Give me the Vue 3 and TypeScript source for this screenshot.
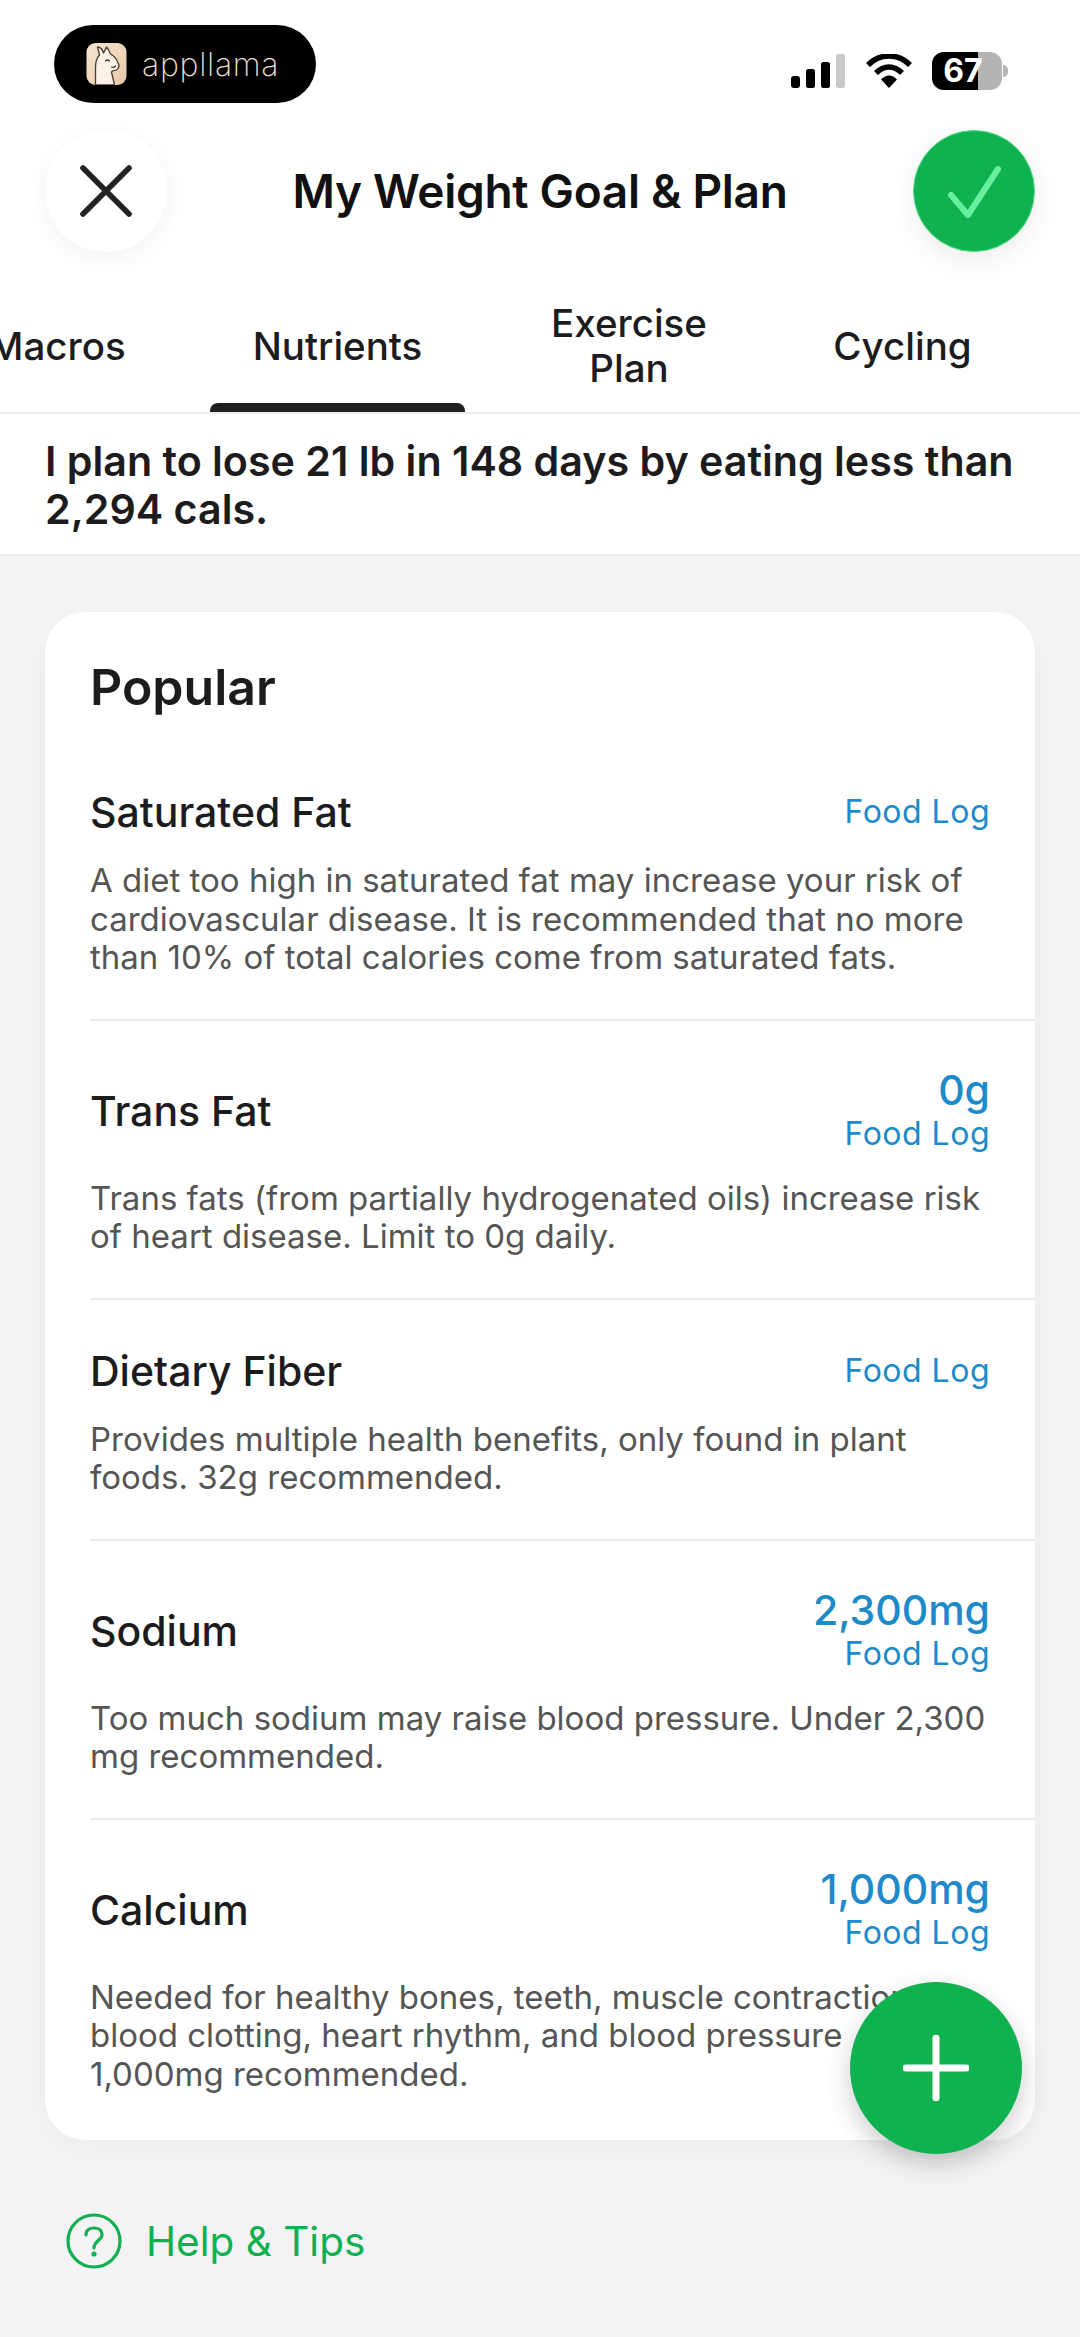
<script setup lang="ts">
interface Nutrient {
  name: string;
  value?: string;
  desc: string;
}
const tabs = [
  { label: "Macros", active: false },
  { label: "Nutrients", active: true },
  { label: "Exercise Plan", active: false },
  { label: "Cycling", active: false },
];
const nutrients: Nutrient[] = [
  { name: "Saturated Fat", desc: "A diet too high in saturated fat may increase your risk of cardiovascular disease. It is recommended that no more than 10% of total calories come from saturated fats." },
  { name: "Trans Fat", value: "0g", desc: "Trans fats (from partially hydrogenated oils) increase risk of heart disease. Limit to 0g daily." },
  { name: "Dietary Fiber", desc: "Provides multiple health benefits, only found in plant foods. 32g recommended." },
  { name: "Sodium", value: "2,300mg", desc: "Too much sodium may raise blood pressure. Under 2,300 mg recommended." },
  { name: "Calcium", value: "1,000mg", desc: "Needed for healthy bones, teeth, muscle contraction, blood clotting, heart rhythm, and blood pressure\u2009 control. 1,000mg recommended." },
];
</script>

<template>
  <div class="page">
    <header class="top">
      <div class="status">
        <div class="pill">
          <svg class="llama" viewBox="0 0 40 42">
            <defs>
              <linearGradient id="lg" x1="0" y1="0" x2="1" y2="1">
                <stop offset="0" stop-color="#f6e6d2" />
                <stop offset="1" stop-color="#e6c9a6" />
              </linearGradient>
            </defs>
            <rect width="40" height="42" rx="9" fill="url(#lg)" />
            <path d="M9 42V25C9 20 10 15 13 12L11 4C14 4 16 7 17 10L20 4C22 6 23 9 24 11C28 13 30 16 31 19C33 22 33 25 30 27C27 28 25 28 25 29L28 42Z" fill="#fbf3e8" stroke="#4a3b2c" stroke-width="1.3" stroke-linejoin="round" />
            <path d="M19 18Q21 16 23 18M29 23Q27 25 25 24" fill="none" stroke="#4a3b2c" stroke-width="1.2" stroke-linecap="round" />
          </svg>
          <span class="brand">appllama</span>
        </div>
        <div class="indicators">
          <svg class="signal" viewBox="0 0 54 34">
            <rect x="0" y="22" width="9" height="12" rx="3" fill="#000" />
            <rect x="15" y="15" width="9" height="19" rx="2.5" fill="#000" />
            <rect x="30" y="8" width="9" height="26" rx="2.5" fill="#000" />
            <rect x="45" y="0" width="9" height="34" rx="2.5" fill="#c9c9c9" />
          </svg>
          <svg class="wifi" viewBox="0 0 46 34">
            <path d="M2 11C14 -1 32 -1 44 11" fill="none" stroke="#000" stroke-width="5.6" />
            <path d="M10 19C18 11 28 11 36 19" fill="none" stroke="#000" stroke-width="5.6" />
            <path d="M15 25.5C20 20 26 20 31 25.5L23 34Z" fill="#000" />
          </svg>
          <div class="battery">
            <div class="cell"><span class="level"></span><span class="pct">67</span></div>
            <span class="nub"></span>
          </div>
        </div>
      </div>

      <div class="titlebar">
        <button class="round close" aria-label="Close">
          <svg viewBox="0 0 52 52" width="52" height="52">
            <path d="M3 3L49 49M49 3L3 49" stroke="#232323" stroke-width="5.6" stroke-linecap="round" />
          </svg>
        </button>
        <h1>My Weight Goal &amp; Plan</h1>
        <button class="round ok" aria-label="Save">
          <svg viewBox="0 0 54 54" width="54" height="54">
            <path d="M4 31L21 51L51 5" fill="none" stroke="#67ef9f" stroke-width="6" stroke-linecap="round" stroke-linejoin="round" />
          </svg>
        </button>
      </div>

      <nav class="tabs">
        <div v-for="t in tabs" :key="t.label" class="tab" :class="{ active: t.active }">
          <span>{{ t.label }}</span>
        </div>
      </nav>

      <p class="summary">I plan to lose 21 lb in 148 days by eating less than 2,294 cals.</p>
    </header>

    <main class="content">
      <section class="card">
        <h2>Popular</h2>
        <article v-for="n in nutrients" :key="n.name" class="row">
          <div class="row-head">
            <h3>{{ n.name }}</h3>
            <div class="side">
              <span v-if="n.value" class="value">{{ n.value }}</span>
              <span class="log">Food Log</span>
            </div>
          </div>
          <p class="desc">{{ n.desc }}</p>
        </article>
      </section>

      <div class="help">
        <svg viewBox="0 0 56 56" width="56" height="56">
          <circle cx="28" cy="28" r="26" fill="none" stroke="#10b050" stroke-width="3.2" />
          <path d="M20 22C20 17 24 15 28 15C32 15 36 17 36 22C36 27 28 28 28 35" fill="none" stroke="#10b050" stroke-width="3.2" stroke-linecap="round" />
          <circle cx="28" cy="41" r="2.6" fill="#10b050" />
        </svg>
        <span>Help &amp; Tips</span>
      </div>
    </main>

    <button class="fab" aria-label="Add">
      <svg viewBox="0 0 66 66" width="66" height="66">
        <path d="M33 3V63M3 33H63" stroke="#fff" stroke-width="7" stroke-linecap="round" />
      </svg>
    </button>
  </div>
</template>

<style>
html, body { margin: 0; background: #f3f2f5; }
</style>

<style scoped>
.page {
  position: relative;
  width: 1080px;
  height: 2337px;
  overflow: hidden;
  background: #f3f2f5;
  font-family: Inter, "Liberation Sans", sans-serif;
  color: #1c1c1e;
}
.top { background: #fff; border-bottom: 2px solid #ececec; }
.status {
  display: flex;
  justify-content: space-between;
  align-items: flex-start;
  height: 130px;
  padding: 25px 0 0 54px;
  box-sizing: border-box;
}
.pill {
  width: 262px;
  height: 78px;
  border-radius: 39px;
  background: #000;
  display: flex;
  align-items: center;
  gap: 15px;
  padding-left: 32px;
  box-sizing: border-box;
}
.llama { width: 41px; height: 42px; }
.brand {
  font-family: Inter, sans-serif;
  font-weight: 200;
  font-size: 32px;
  letter-spacing: 0.7px;
  color: #eadfce;
}
.indicators {
  display: flex;
  align-items: center;
  margin: 27px 72px 0 0;
}
.signal { width: 54px; height: 34px; }
.wifi { width: 46px; height: 34px; margin-left: 21px; }
.battery { display: flex; align-items: center; margin-left: 20px; }
.cell {
  position: relative;
  width: 70px;
  height: 38px;
  border-radius: 12px;
  overflow: hidden;
  background: #b4b4b4;
}
.level { position: absolute; left: 0; top: 0; bottom: 0; width: 46px; background: #000; }
.pct {
  position: absolute;
  left: 0;
  top: 0;
  width: 62px;
  text-align: center;
  color: #fff;
  font-weight: 700;
  font-size: 32px;
  line-height: 38px;
}
.nub { width: 5px; height: 12px; margin-left: 1px; border-radius: 0 6px 6px 0; background: #b4b4b4; }

.titlebar {
  display: flex;
  align-items: center;
  justify-content: space-between;
  height: 122px;
  padding: 0 45px;
}
.round {
  width: 122px;
  height: 122px;
  border: 0;
  padding: 0;
  border-radius: 50%;
  display: flex;
  align-items: center;
  justify-content: center;
}
.close { background: #fff; box-shadow: 0 6px 24px rgba(0, 0, 0, 0.05); }
.ok { background: #10b250; border: 1px solid #52dd88; box-sizing: border-box; box-shadow: 0 8px 28px rgba(0, 0, 0, 0.08); }
h1 {
  margin: 0;
  font-size: 46px;
  font-weight: 600;
  color: #111;
  letter-spacing: -0.3px;
}

.tabs {
  display: flex;
  height: 160px;
  margin-left: -71px;
  border-bottom: 2px solid #ececec;
  overflow: hidden;
}
.tab {
  position: relative;
  flex: none;
  width: 255px;
  display: flex;
  align-items: center;
  justify-content: center;
  text-align: center;
  box-sizing: border-box;
  padding: 28px 40px 0;
  font-size: 38.5px;
  line-height: 45px;
  font-weight: 500;
  color: #1c1c1e;
}
.tab:first-child { width: 256px; margin-right: 25px; }
.tab:nth-child(3) { width: 280px; margin: 0 6px 0 24px; }
.tab.active::after {
  content: "";
  position: absolute;
  left: 0;
  right: 0;
  bottom: 0;
  height: 9px;
  border-radius: 8px 8px 0 0;
  background: #1f1f1f;
}
.summary {
  margin: 0;
  padding: 23px 45px 21px;
  font-size: 41.2px;
  line-height: 48px;
  font-weight: 600;
  color: #1c1c1e;
}

.content { padding: 56px 45px 0; }
.card {
  background: #fff;
  border-radius: 40px;
  padding-top: 45px;
  overflow: hidden;
  box-shadow: 0 8px 30px rgba(0, 0, 0, 0.03);
}
h2 {
  margin: 0 0 24px 45px;
  font-size: 50px;
  line-height: 60px;
  font-weight: 600;
  color: #1c1c1e;
}
.row {
  margin-left: 45px;
  padding: 48px 45px 42px 0;
  border-bottom: 2px solid #e9e9ec;
}
.row:last-child { border-bottom: 0; padding-bottom: 47px; }
.row-head {
  display: flex;
  justify-content: space-between;
  align-items: center;
  min-height: 46px;
}
h3 { margin: 0; font-size: 41px; line-height: 46px; font-weight: 500; color: #1c1c1e; }
.side { display: flex; flex-direction: column; align-items: flex-end; margin: -1px 0; }
.value { font-size: 41px; line-height: 44px; margin-bottom: 2px; font-weight: 500; color: #1c8acb; }
.log { font-size: 32px; line-height: 40px; color: #1c8acb; letter-spacing: 0.5px; }
.desc {
  margin: 26px 0 0;
  font-size: 33px;
  line-height: 38.5px;
  color: #555;
}
.help {
  display: flex;
  align-items: center;
  gap: 24px;
  margin: 73px 0 0 21px;
  font-size: 40.5px;
  color: #10b050;
}
.fab {
  position: absolute;
  left: 850px;
  top: 1982px;
  width: 172px;
  height: 172px;
  border: 0;
  padding: 0;
  border-radius: 50%;
  background: #10b250;
  display: flex;
  align-items: center;
  justify-content: center;
  box-shadow: 0 10px 26px rgba(0, 0, 0, 0.2);
}
</style>
